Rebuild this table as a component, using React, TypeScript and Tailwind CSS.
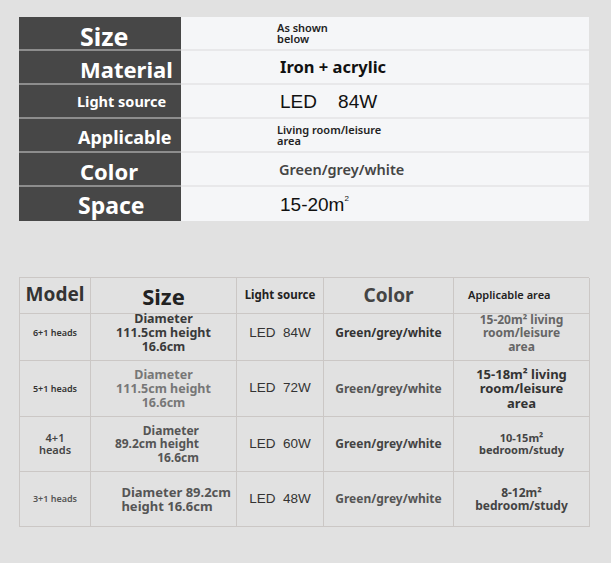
import React from 'react';

// Product spec sheet: a dark/light key-value table and a model comparison grid

const sans = { fontFamily: '"Noto Sans", "Open Sans", sans-serif' };
const arial = { fontFamily: '"Liberation Sans", Arial, sans-serif' };

type SpecRow = { label: string; labelClass: string; value: React.ReactNode };

const specs: SpecRow[] = [
  {
    label: 'Size',
    labelClass: 'text-[25px] pl-[61px] pt-[6px]',
    value: (
      <span className="text-[11px] font-semibold leading-[11.5px] text-[#222]" style={sans}>
        As shown
        <br />
        below
      </span>
    ),
  },
  {
    label: 'Material',
    labelClass: 'text-[22px] pl-[61px] pt-[3px]',
    value: (
      <span className="pl-[3px] text-[16.5px] font-bold leading-none text-[#111]" style={sans}>
        Iron + acrylic
      </span>
    ),
  },
  {
    label: 'Light source',
    labelClass: 'text-[14.5px] pl-[58px]',
    value: (
      <span className="pl-[3px] text-[19px] leading-none text-[#111] whitespace-pre" style={arial}>
        {'LED    84W'}
      </span>
    ),
  },
  {
    label: 'Applicable',
    labelClass: 'text-[18px] pl-[59px] pt-[3px]',
    value: (
      <span className="text-[11px] font-semibold leading-[11.5px] text-[#222]" style={sans}>
        Living room/leisure
        <br />
        area
      </span>
    ),
  },
  {
    label: 'Color',
    labelClass: 'text-[22px] pl-[61px] pt-[3px]',
    value: (
      <span className="pl-[2px] text-[14.5px] font-semibold leading-none text-[#444]" style={sans}>
        Green/grey/white
      </span>
    ),
  },
  {
    label: 'Space',
    labelClass: 'text-[23px] pl-[59px] pt-[3px]',
    value: (
      <span className="pl-[3px] text-[19px] leading-none text-[#111]" style={arial}>
        15-20m<sup className="text-[8px] align-[6px]">2</sup>
      </span>
    ),
  },
];

type ModelRow = {
  model: React.ReactNode;
  modelClass: string;
  size: React.ReactNode;
  sizeCell: string;
  sizeClass: string;
  watt: string;
  colorClass: string;
  area: React.ReactNode;
  areaClass: string;
  h: string;
};

const models: ModelRow[] = [
  {
    model: '6+1 heads',
    modelClass: 'text-[9px] text-[#333]',
    size: (
      <>
        Diameter
        <br />
        111.5cm height
        <br />
        16.6cm
      </>
    ),
    sizeCell: 'justify-center',
    sizeClass: 'text-center text-[12.5px] text-[#3a3a3a] leading-[14px]',
    watt: 'LED  84W',
    colorClass: 'text-[#333]',
    area: (
      <>
        15-20m² living
        <br />
        room/leisure
        <br />
        area
      </>
    ),
    areaClass: 'text-[12px] leading-[13.5px] text-[#666]',
    h: 'h-[55px]',
  },
  {
    model: '5+1 heads',
    modelClass: 'text-[9px] text-[#333]',
    size: (
      <>
        Diameter
        <br />
        111.5cm height
        <br />
        16.6cm
      </>
    ),
    sizeCell: 'justify-center',
    sizeClass: 'text-center text-[12.5px] text-[#777] leading-[14px]',
    watt: 'LED  72W',
    colorClass: 'text-[#555]',
    area: (
      <>
        15-18m² living
        <br />
        room/leisure
        <br />
        area
      </>
    ),
    areaClass: 'text-[13px] leading-[14.5px] text-[#333]',
    h: 'h-[56px]',
  },
  {
    model: (
      <>
        4+1
        <br />
        heads
      </>
    ),
    modelClass: 'text-[11px] leading-[12px] text-[#444]',
    size: (
      <>
        Diameter
        <br />
        89.2cm height
        <br />
        16.6cm
      </>
    ),
    sizeCell: 'justify-end pr-[37px]',
    sizeClass: 'text-right text-[12px] text-[#555] leading-[13.5px]',
    watt: 'LED  60W',
    colorClass: 'text-[#444]',
    area: (
      <>
        10-15m²
        <br />
        bedroom/study
      </>
    ),
    areaClass: 'text-[11px] leading-[12px] text-[#444]',
    h: 'h-[55px]',
  },
  {
    model: '3+1 heads',
    modelClass: 'text-[9px] text-[#555]',
    size: (
      <>
        Diameter 89.2cm
        <br />
        height 16.6cm
      </>
    ),
    sizeCell: 'justify-end pr-[5px]',
    sizeClass: 'text-left text-[13px] text-[#555] leading-[14px]',
    watt: 'LED  48W',
    colorClass: 'text-[#555]',
    area: (
      <>
        8-12m²
        <br />
        bedroom/study
      </>
    ),
    areaClass: 'text-[12px] leading-[13px] text-[#444]',
    h: 'h-[55px]',
  },
];

function SpecTable() {
  return (
    <div className="ml-[19px] mt-[17px] w-[570px]">
      {specs.map((row, i) => (
        <div key={row.label} className="grid h-[34px] grid-cols-[162px_1fr] overflow-hidden">
          <div
            className={`flex items-center bg-[#474747] font-bold leading-none text-white ${
              i < specs.length - 1 ? 'border-b-2 border-[#8d8d8d]' : ''
            } ${row.labelClass}`}
            style={sans}
          >
            {row.label}
          </div>
          <div
            className={`flex items-center bg-[#f5f6f8] pl-[96px] ${
              i < specs.length - 1 ? 'border-b-2 border-[#e8e8ea]' : ''
            }`}
          >
            {row.value}
          </div>
        </div>
      ))}
    </div>
  );
}

function ModelTable() {
  const cols = 'grid grid-cols-[71px_146px_87px_130px_136px]';
  const cell = 'flex items-center justify-center border-r border-b border-[#cbc7c5] text-center';
  return (
    <div className="ml-[19px] mt-[56px] w-[570px] border-l border-t border-[#cbc7c5]" style={sans}>
      <div className={`${cols} h-[28px]`}>
        <div className={`${cell} pb-[3px] text-[19px] font-bold text-[#333]`}>Model</div>
        <div className={`${cell} pt-[2px] text-[22px] font-bold text-[#222]`}>Size</div>
        <div className={`${cell} pb-[2px] text-[11.5px] font-bold text-[#222]`}>Light source</div>
        <div className={`${cell} pb-[1px] text-[19px] font-bold text-[#444]`}>Color</div>
        <div className={`${cell} justify-start pl-[14px] text-[11px] font-semibold text-[#222]`}>
          Applicable area
        </div>
      </div>
      {models.map((m, i) => (
        <div key={i} className={`${cols} ${m.h}`}>
          <div className={`${cell} font-semibold ${m.modelClass}`}>{m.model}</div>
          <div className={`${cell} ${m.sizeCell}`}>
            <div className={`font-bold ${m.sizeClass}`}>{m.size}</div>
          </div>
          <div className={`${cell} whitespace-pre text-[13.5px] text-[#333]`} style={arial}>
            {m.watt}
          </div>
          <div className={`${cell} text-[12px] font-bold ${m.colorClass}`}>Green/grey/white</div>
          <div className={`${cell} font-bold ${m.areaClass}`}>{m.area}</div>
        </div>
      ))}
    </div>
  );
}

export default function App() {
  return (
    <div className="h-[563px] w-[611px] overflow-hidden bg-[#e1e1e1]">
      <SpecTable />
      <ModelTable />
    </div>
  );
}
